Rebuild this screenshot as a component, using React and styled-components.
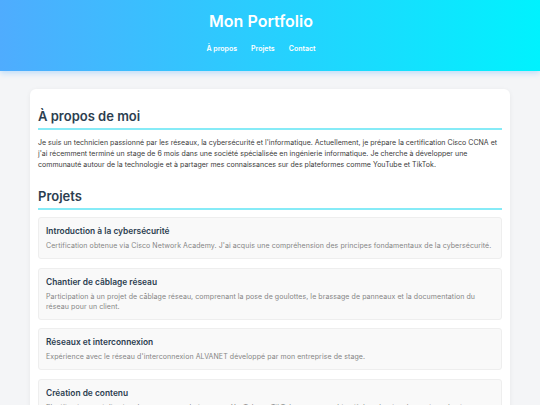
import { createGlobalStyle, styled } from "styled-components";

const GlobalStyle = createGlobalStyle`
  * { box-sizing: border-box; }
  body {
    margin: 0;
    background: #f4f5f7;
    font-family: "Inter", "Noto Sans", sans-serif;
    color: #333;
  }
`;

const Header = styled.header`
  background: linear-gradient(90deg, #4facfe 0%, #00f2fe 100%);
  height: 71px;
  padding: 9px 18px 0 0;
  text-align: center;
  box-shadow: 0 2px 6px rgba(79, 172, 254, 0.35);
`;

const Title = styled.h1`
  margin: 0;
  font-size: 16px;
  font-weight: 600;
  color: #fff;
  line-height: 24px;
`;

const Nav = styled.nav`
  display: flex;
  justify-content: center;
  gap: 14px;
  margin-top: 11px;
`;

const NavLink = styled.a`
  color: #fff;
  font-size: 7px;
  font-weight: 600;
  text-decoration: none;
`;

const Main = styled.main`
  padding: 18px 30px 0;
`;

const Card = styled.div`
  background: #fff;
  border-radius: 6px;
  padding: 18px 8px 20px;
  box-shadow: 0 1px 5px rgba(0, 0, 0, 0.06);
`;

const Section = styled.section`
  & + & {
    margin-top: 17px;
  }
`;

const SectionTitle = styled.h2`
  margin: 0 0 7px;
  padding-bottom: 3px;
  font-size: 13px;
  font-weight: 600;
  line-height: 18px;
  color: #2c3e50;
  border-bottom: 2px solid #86ebf7;
`;

const Text = styled.p`
  margin: 0;
  font-size: 7px;
  letter-spacing: 0.02px;
  line-height: 11px;
  color: #3a3a3a;
`;

const ProjectList = styled.div`
  display: flex;
  flex-direction: column;
  gap: 8.5px;
`;

const Project = styled.div`
  background: #f9f9f9;
  border: 1px solid #eeeeee;
  border-radius: 3px;
  padding: 7px;
`;

const ProjectTitle = styled.h3`
  margin: 0 0 4px;
  font-size: 8.4px;
  font-weight: 600;
  line-height: 12px;
  color: #2c3e50;
`;

const ProjectText = styled.p`
  margin: 0;
  font-size: 7px;
  letter-spacing: 0.08px;
  line-height: 10px;
  color: #858585;
`;

const projects = [
  {
    title: "Introduction à la cybersécurité",
    text: "Certification obtenue via Cisco Network Academy. J'ai acquis une compréhension des principes fondamentaux de la cybersécurité.",
  },
  {
    title: "Chantier de câblage réseau",
    text: "Participation à un projet de câblage réseau, comprenant la pose de goulottes, le brassage de panneaux et la documentation du réseau pour un client.",
  },
  {
    title: "Réseaux et interconnexion",
    text: "Expérience avec le réseau d'interconnexion ALVANET développé par mon entreprise de stage.",
  },
  {
    title: "Création de contenu",
    text: "Planification et réalisation de contenus techniques sur YouTube et TikTok, avec pour objectif de vulgariser les notions de réseau et de cybersécurité.",
  },
];

function App() {
  return (
    <>
      <GlobalStyle />
      <Header>
        <Title>Mon Portfolio</Title>
        <Nav>
          <NavLink href="#about">À propos</NavLink>
          <NavLink href="#projects">Projets</NavLink>
          <NavLink href="#contact">Contact</NavLink>
        </Nav>
      </Header>

      <Main>
        <Card>
          <Section id="about">
            <SectionTitle>À propos de moi</SectionTitle>
            <Text>
              Je suis un technicien passionné par les réseaux, la cybersécurité et l'informatique. Actuellement, je
              prépare la certification Cisco CCNA et j'ai récemment terminé un stage de 6 mois dans une société
              spécialisée en ingénierie informatique. Je cherche à développer une communauté autour de la technologie
              et à partager mes connaissances sur des plateformes comme YouTube et TikTok.
            </Text>
          </Section>

          <Section id="projects">
            <SectionTitle>Projets</SectionTitle>
            <ProjectList>
              {projects.map((p) => (
                <Project key={p.title}>
                  <ProjectTitle>{p.title}</ProjectTitle>
                  <ProjectText>{p.text}</ProjectText>
                </Project>
              ))}
            </ProjectList>
          </Section>
        </Card>
      </Main>
    </>
  );
}

export default App;
